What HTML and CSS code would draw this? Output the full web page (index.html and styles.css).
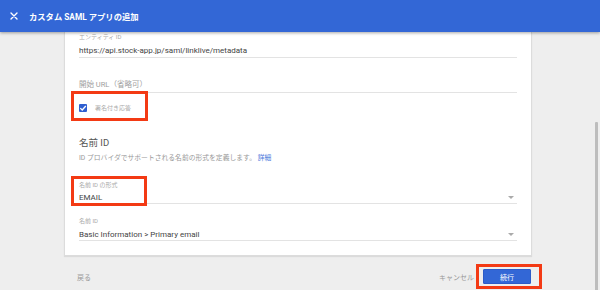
FILE: index.html
```html
<!DOCTYPE html>
<html lang="ja">
<head>
<meta charset="utf-8">
<link rel="stylesheet" href="styles.css">
</head>
<body>
<header class="topbar">
  <svg class="close" width="8" height="8" viewBox="0 0 8 8"><path d="M1 1L7 7M7 1L1 7" stroke="#fff" stroke-width="1.4" stroke-linecap="round"/></svg>
  <span class="title">カスタム SAML アプリの追加</span>
</header>
<div class="body-row">
  <main class="main">
    <section class="card">
      <div class="field">
        <div class="label">エンティティ ID</div>
        <div class="value">https://api.stock-app.jp/saml/linklive/metadata</div>
      </div>
      <div class="field field-empty">
        <div class="placeholder">開始 URL（省略可）</div>
      </div>
      <div class="check-row">
        <span class="checkbox"><svg width="8" height="8" viewBox="0 0 8 8"><path d="M1.3 4.1L3.2 6L6.8 2" stroke="#fff" stroke-width="1.3" fill="none"/></svg></span>
        <span class="check-label">署名付き応答</span>
        <span class="annot annot-check"></span>
      </div>
      <h2 class="section-title">名前 ID</h2>
      <p class="desc">ID プロバイダでサポートされる名前の形式を定義します。 <a class="link">詳細</a></p>
      <div class="field select-field first-select">
        <div class="label">名前 ID の形式</div>
        <div class="value select-value">EMAIL<span class="arrow"></span></div>
        <span class="annot annot-format"></span>
      </div>
      <div class="field select-field second-select">
        <div class="label">名前 ID</div>
        <div class="value select-value">Basic Information &gt; Primary email<span class="arrow"></span></div>
      </div>
    </section>
    <footer class="actions">
      <span class="back">戻る</span>
      <div class="right-actions">
        <span class="cancel">キャンセル</span>
        <span class="continue">続行<span class="annot annot-btn"></span></span>
      </div>
    </footer>
  </main>
  <div class="scroll-track"><div class="scroll-thumb"></div></div>
</div>
</body>
</html>
```
FILE: styles.css
```css
* { box-sizing: border-box; }
html, body {
  margin: 0;
  padding: 0;
  width: 600px;
  height: 290px;
  overflow: hidden;
  background: #eeeeee;
  font-family: Roboto, "Noto Sans CJK JP", sans-serif;
  color: #333;
}
.topbar {
  position: relative;
  z-index: 2;
  height: 32px;
  background: #3367d6;
  box-shadow: 0 1px 3px rgba(0,0,0,0.35);
  display: flex;
  align-items: center;
  padding-left: 10px;
  color: #fff;
}
.close { display: block; margin-right: 11px; }
.title {
  font-size: 8.3px;
  font-weight: 700;
}
.body-row {
  display: flex;
  height: 258px;
}
.main {
  flex: 1;
  padding-left: 64px;
}
.card {
  width: 468px;
  background: #fff;
  border: 1px solid #dcdcdc;
  border-top: none;
  box-shadow: 0 1px 1px rgba(0,0,0,0.08);
  padding: 1px 14px 14px 14px;
}
.field {
  position: relative;
  border-bottom: 1px solid #e3e3e3;
}
.label {
  font-size: 6px;
  line-height: 7px;
  color: #aaa;
}
.value {
  font-size: 8px;
  line-height: 10px;
  color: #444;
}
.field:first-child .value { margin-top: 6px; padding-bottom: 1px; }
.field-empty { margin-top: 22px; padding-bottom: 2px; }
.placeholder {
  font-size: 7.5px;
  line-height: 10px;
  color: #9e9e9e;
}
.check-row {
  position: relative;
  display: flex;
  align-items: center;
  height: 28px;
  padding-top: 1px;
}
.checkbox {
  width: 8px;
  height: 8px;
  background: #2f5fd0;
  border-radius: 1px;
  display: flex;
  align-items: center;
  justify-content: center;
  margin-right: 8px;
}
.checkbox svg { display: block; }
.check-label {
  font-size: 6px;
  color: #aaa;
}
.annot {
  position: absolute;
  border: 3px solid #f33a14;
  pointer-events: none;
}
.annot-check { left: -8px; top: -2px; width: 77px; height: 30px; }
.section-title {
  margin: 16px 0 0;
  font-size: 9.5px;
  line-height: 12px;
  font-weight: 400;
  color: #555;
}
.desc {
  margin: 4px 0 0;
  font-size: 6.8px;
  line-height: 10px;
  color: #999;
}
.link { color: #4a78dc; }
.first-select { margin-top: 18px; }
.second-select { margin-top: 13px; }
.select-value {
  position: relative;
  margin-top: 5px;
}
.second-select .select-value { margin-top: 6px; }
.arrow {
  position: absolute;
  right: 3px;
  top: 3px;
  width: 0;
  height: 0;
  border-left: 3px solid transparent;
  border-right: 3px solid transparent;
  border-top: 3px solid #aaa;
}
.annot-format { left: -8px; top: -5px; width: 76px; height: 30px; }
.actions {
  width: 468px;
  display: flex;
  justify-content: space-between;
  align-items: center;
  padding: 13px 1px 0 13px;
}
.back, .cancel {
  font-size: 7px;
  color: #999;
}
.right-actions {
  display: flex;
  align-items: center;
}
.cancel { margin-right: 9px; }
.continue {
  position: relative;
  width: 48px;
  height: 15px;
  background: #3367d6;
  border: 1px solid #2c5bc8;
  color: #fff;
  font-size: 7px;
  display: flex;
  align-items: center;
  justify-content: center;
  border-radius: 1px;
}
.annot-btn { left: -8px; top: -6px; width: 66px; height: 25px; }
.scroll-track {
  width: 8px;
  padding-left: 3px;
}
.scroll-thumb {
  width: 3px;
  height: 170px;
  margin-top: 90px;
  background: #bdbdbd;
  border-radius: 1px;
}
```
